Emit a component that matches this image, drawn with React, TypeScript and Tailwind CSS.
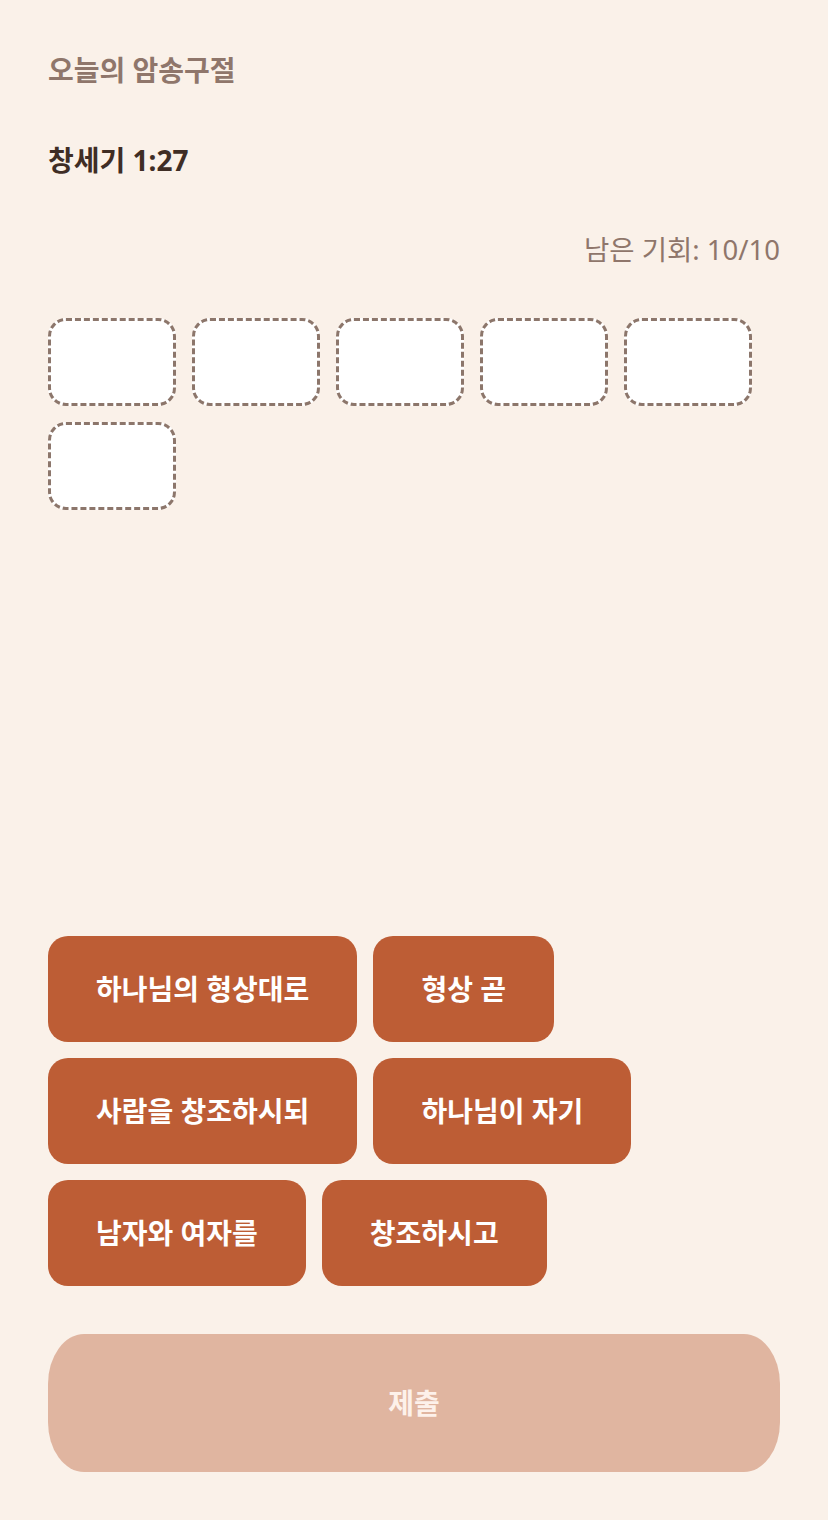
import React from "react";

const words = [
  "하나님의 형상대로",
  "형상 곧",
  "사람을 창조하시되",
  "하나님이 자기",
  "남자와 여자를",
  "창조하시고",
];

export default function App() {
  return (
    <div
      className="min-h-screen bg-[#faf1e9] px-12 pt-12 pb-12 flex flex-col"
      style={{ fontFamily: '"Noto Sans", "Noto Sans CJK KR", sans-serif' }}
    >
      <div className="text-[28px] leading-[44px] font-bold text-[#8f766b]">오늘의 암송구절</div>
      <div className="mt-12 text-[28px] leading-[40px] font-bold text-[#3f2d25]">창세기 1:27</div>
      <div className="mt-[52px] text-right text-[27.5px] leading-[36px] text-[#8f766b]">남은 기회: 10/10</div>
      <div className="mt-[50px] flex flex-wrap gap-4">
        {Array.from({ length: 6 }).map((_, i) => (
          <div
            key={i}
            className="w-[128px] h-[88px] rounded-[18px] border-[3px] border-dashed border-[#8c766b] bg-white"
          />
        ))}
      </div>
      <div className="flex-1" />
      <div className="flex flex-wrap gap-4">
        {words.map((w) => (
          <button
            key={w}
            className="h-[106px] px-12 rounded-[20px] bg-[#bd5d35] text-white text-[28px] font-bold leading-none"
          >
            {w}
          </button>
        ))}
      </div>
      <button className="mt-12 h-[138px] w-full rounded-[36px/50px] bg-[#e0b5a0] text-[#fdf1ea] text-[28px] font-bold">
        제출
      </button>
    </div>
  );
}
